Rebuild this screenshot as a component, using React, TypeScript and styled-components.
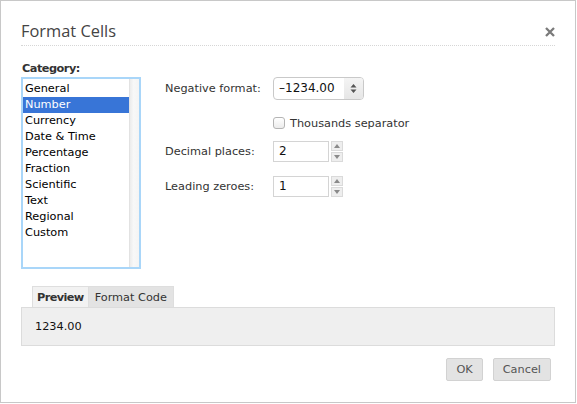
import React from "react";
import styled, { createGlobalStyle } from "styled-components";

const Global = createGlobalStyle`
  html, body { margin: 0; padding: 0; background: #ffffff; }
  * { box-sizing: border-box; }
  body { font-family: "DejaVu Sans", Verdana, sans-serif; }
`;

const Dialog = styled.div`
  width: 576px;
  height: 403px;
  border: 1px solid #c8c8c8;
  background: #ffffff;
  display: flex;
  flex-direction: column;
  padding: 0 20px;
`;

const Header = styled.div`
  display: flex;
  align-items: center;
  justify-content: space-between;
  padding: 20px 0 4px;
  border-bottom: 1px dotted #d6d6d6;
`;

const Title = styled.h1`
  margin: 0;
  font-family: "Open Sans", sans-serif;
  font-weight: 400;
  font-size: 16.4px;
  line-height: 20px;
  color: #444444;
`;

const Close = styled.button`
  border: 0;
  background: none;
  padding: 0;
  width: 10px;
  height: 10px;
  display: flex;
  margin-top: 2px;
  cursor: pointer;
`;

const Body = styled.div`
  display: flex;
  padding-top: 16px;
  gap: 24px;
`;

const CategoryCol = styled.div`
  display: flex;
  flex-direction: column;
  width: 120px;
`;

const BoldLabel = styled.div`
  font-weight: 700;
  font-size: 11.3px;
  letter-spacing: -0.5px;
  line-height: 14px;
  color: #333333;
  margin-left: 1px;
  margin-bottom: 1px;
`;

const ListBox = styled.div`
  height: 192px;
  border: 2px solid #a9d6f9;
  display: flex;
  padding-top: 1px;
`;

const Items = styled.div`
  flex: 1;
  display: flex;
  flex-direction: column;
  padding-top: 1px;
`;

const Item = styled.div<{ $selected?: boolean }>`
  height: 16px;
  line-height: 16px;
  font-size: 11.3px;
  padding-left: 2px;
  color: ${(p) => (p.$selected ? "#ffffff" : "#000000")};
  background: ${(p) => (p.$selected ? "#3875d7" : "transparent")};
`;

const ScrollTrack = styled.div`
  width: 10px;
  margin-top: -1px;
  background: linear-gradient(to right, #ececec, #f8f8f8 40%, #f4f4f4);
  border-left: 1px solid #e2e2e2;
`;

const FormCol = styled.div`
  display: flex;
  flex-direction: column;
  padding-top: 15px;
`;

const Row = styled.div<{ $mt?: number; $h: number }>`
  display: flex;
  align-items: center;
  height: ${(p) => p.$h}px;
  margin-top: ${(p) => p.$mt ?? 0}px;
`;

const FieldLabel = styled.div`
  width: 108px;
  font-size: 11.3px;
  color: #333333;
`;

const Select = styled.div`
  width: 91px;
  height: 23px;
  border: 1px solid #c9c9c9;
  border-radius: 4px;
  background: #ffffff;
  display: flex;
  align-items: stretch;
  overflow: hidden;
`;

const SelectValue = styled.div`
  flex: 1;
  font-size: 12px;
  line-height: 21px;
  padding-left: 5px;
  color: #111111;
`;

const SelectArrow = styled.div`
  width: 19px;
  background: linear-gradient(#f4f4f4, #e6e6e6);
  display: flex;
  align-items: center;
  justify-content: center;
`;

const CheckLine = styled.label`
  display: flex;
  align-items: center;
  gap: 5px;
  margin-left: 108px;
  font-size: 11.3px;
  color: #333333;
`;

const Check = styled.input`
  appearance: none;
  margin: 0;
  width: 12px;
  height: 12px;
  border: 1px solid #b4b4b4;
  border-radius: 3px;
  background: linear-gradient(#ffffff, #ececec);
`;

const NumInput = styled.div`
  width: 56px;
  height: 21px;
  border: 1px solid #d4d4d4;
  font-size: 12px;
  line-height: 19px;
  padding-left: 5px;
  color: #111111;
`;

const Spin = styled.div`
  display: flex;
  flex-direction: column;
  gap: 1px;
  margin-left: 2px;
`;

const SpinBtn = styled.div`
  width: 12px;
  height: 10px;
  background: #eeeeee;
  border: 1px solid #dadada;
  display: flex;
  align-items: center;
  justify-content: center;
`;

const TabsArea = styled.div`
  margin-top: 17px;
  display: flex;
  flex-direction: column;
`;

const TabBar = styled.div`
  display: flex;
  padding-left: 11px;
`;

const Tab = styled.div<{ $active?: boolean }>`
  height: 21px;
  line-height: 21px;
  padding: 0 ${(p) => (p.$active ? 4 : 6)}px;
  font-size: 11.3px;
  color: #333333;
  font-weight: ${(p) => (p.$active ? 700 : 400)};
  letter-spacing: ${(p) => (p.$active ? "-0.6px" : "0")};
  background: ${(p) => (p.$active ? "#f2f2f2" : "#e3e3e3")};
  border: 1px solid #dedede;
  border-bottom: 0;
  ${(p) => (p.$active ? "" : "border-left: 0;")}
`;

const PreviewPanel = styled.div`
  height: 39px;
  background: #efefef;
  border: 1px solid #dcdcdc;
  padding-left: 13px;
  display: flex;
  align-items: center;
  font-size: 11.3px;
  color: #111111;
`;

const Footer = styled.div`
  display: flex;
  justify-content: flex-end;
  gap: 10px;
  margin-top: 12px;
  padding-right: 4px;
`;

const Button = styled.button`
  height: 23px;
  padding: 0 9px;
  border: 1px solid #d2d2d2;
  border-radius: 2px;
  background: #e3e3e3;
  font-family: "DejaVu Sans", sans-serif;
  font-size: 11.3px;
  color: #555555;
  cursor: pointer;
`;

const Tri = ({ up }: { up?: boolean }) => (
  <svg width="6" height="4" viewBox="0 0 6 4">
    <path d={up ? "M0 4 L3 0 L6 4 Z" : "M0 0 L3 4 L6 0 Z"} fill="#8a8a8a" />
  </svg>
);

const categories = [
  "General",
  "Number",
  "Currency",
  "Date & Time",
  "Percentage",
  "Fraction",
  "Scientific",
  "Text",
  "Regional",
  "Custom",
];

export default function App() {
  return (
    <>
      <Global />
      <Dialog>
        <Header>
          <Title>Format Cells</Title>
          <Close aria-label="Close">
            <svg width="10" height="10" viewBox="0 0 10 10">
              <path d="M1 1 L9 9 M9 1 L1 9" stroke="#7a7a7a" strokeWidth="2.3" />
            </svg>
          </Close>
        </Header>
        <Body>
          <CategoryCol>
            <BoldLabel>Category:</BoldLabel>
            <ListBox>
              <Items>
                {categories.map((c) => (
                  <Item key={c} $selected={c === "Number"}>
                    {c}
                  </Item>
                ))}
              </Items>
              <ScrollTrack />
            </ListBox>
          </CategoryCol>
          <FormCol>
            <Row $h={23}>
              <FieldLabel>Negative format:</FieldLabel>
              <Select>
                <SelectValue>–1234.00</SelectValue>
                <SelectArrow>
                  <svg width="7" height="11" viewBox="0 0 7 11">
                    <path d="M0.5 4.5 L3.5 1 L6.5 4.5 Z M0.5 6.5 L3.5 10 L6.5 6.5 Z" fill="#555555" />
                  </svg>
                </SelectArrow>
              </Select>
            </Row>
            <Row $h={14} $mt={16}>
              <CheckLine>
                <Check type="checkbox" />
                Thousands separator
              </CheckLine>
            </Row>
            <Row $h={21} $mt={11}>
              <FieldLabel>Decimal places:</FieldLabel>
              <NumInput>2</NumInput>
              <Spin>
                <SpinBtn>
                  <Tri up />
                </SpinBtn>
                <SpinBtn>
                  <Tri />
                </SpinBtn>
              </Spin>
            </Row>
            <Row $h={21} $mt={14}>
              <FieldLabel>Leading zeroes:</FieldLabel>
              <NumInput>1</NumInput>
              <Spin>
                <SpinBtn>
                  <Tri up />
                </SpinBtn>
                <SpinBtn>
                  <Tri />
                </SpinBtn>
              </Spin>
            </Row>
          </FormCol>
        </Body>
        <TabsArea>
          <TabBar>
            <Tab $active>Preview</Tab>
            <Tab>Format Code</Tab>
          </TabBar>
          <PreviewPanel>1234.00</PreviewPanel>
        </TabsArea>
        <Footer>
          <Button>OK</Button>
          <Button>Cancel</Button>
        </Footer>
      </Dialog>
    </>
  );
}
